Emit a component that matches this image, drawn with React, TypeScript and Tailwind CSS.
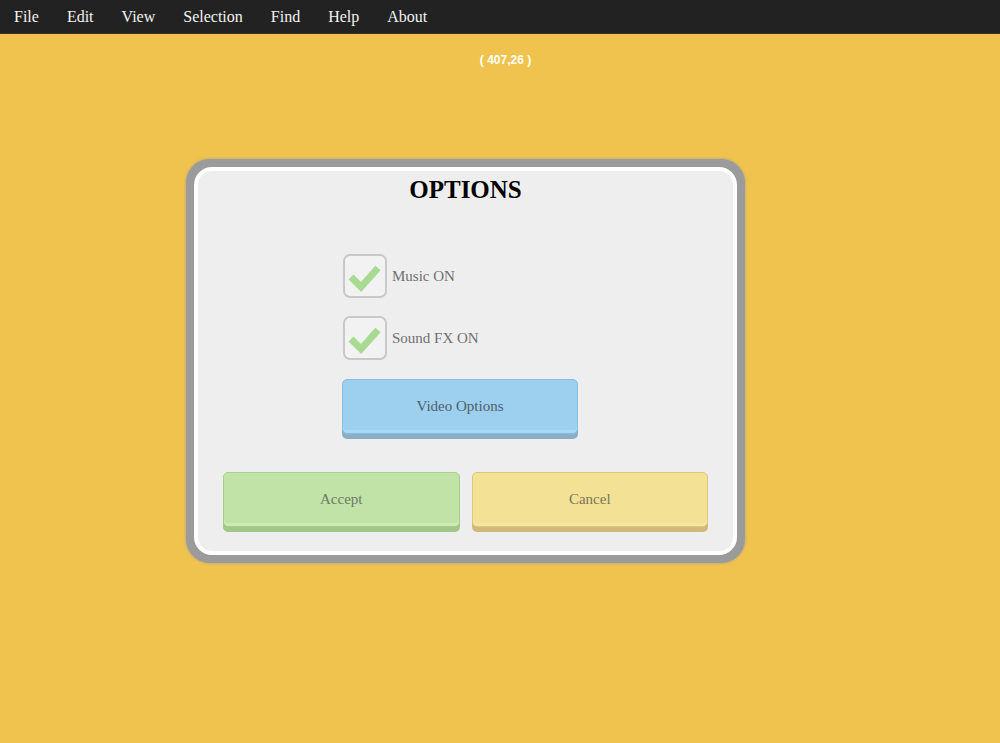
const menuItems = ["File", "Edit", "View", "Selection", "Find", "Help", "About"];

function CheckRow({ label }: { label: string }) {
  return (
    <label className="flex h-[44px] items-center gap-[5px]">
      <span className="flex h-[44px] w-[44px] items-center justify-center rounded-[7px] border-2 border-[#c8c8c8] bg-[#f2f2f2]">
        <svg width="44" height="44" viewBox="0 0 44 44" className="shrink-0">
          <polyline
            points="8,23 18,33 35,14"
            fill="none"
            stroke="#a8da92"
            strokeWidth="7"
            strokeLinejoin="miter"
          />
        </svg>
      </span>
      <span className="text-[15px] text-[#707070]">{label}</span>
    </label>
  );
}

export default function App() {
  return (
    <div className="flex min-h-[743px] w-full flex-col bg-[#f0c34f] font-['Liberation_Serif',serif]">
      <nav className="flex h-[34px] items-center border-b border-[#3a3428] bg-[#222222]">
        {menuItems.map((item) => (
          <span key={item} className="px-[14px] text-[16px] text-[#f2f2f2]">
            {item}
          </span>
        ))}
      </nav>

      <div className="mt-[19px] flex justify-center pl-[11px] font-['Liberation_Sans',sans-serif] text-[12px] font-bold leading-[14px] text-white">
        ( 407,26 )
      </div>

      <div className="ml-[186px] mt-[92px] w-[559px] rounded-[24px] bg-[#9b9b9b] p-[8px] shadow-[0_0_3px_#9b9b9b]">
        <div className="rounded-[18px] border-4 border-white bg-[#eeeeee] px-[25px] pb-[24px] pt-[5px]">
          <h1 className="text-center text-[25px] font-bold leading-[28px] text-black">
            OPTIONS
          </h1>

          <div className="ml-[120px] mt-[50px] flex flex-col gap-[18px]">
            <CheckRow label="Music ON" />
            <CheckRow label="Sound FX ON" />
          </div>

          <button className="ml-[119px] mt-[19px] h-[55px] w-[236px] rounded-[5px] border border-[#86bfe2] bg-[#9dd0ee] text-[15px] text-[#4d5f6b] shadow-[inset_0_-3px_0_#a9d8f2,0_5px_0_#8aaec6]">
            Video Options
          </button>

          <div className="mt-[38px] flex gap-[12px]">
            <button className="h-[55px] w-[237px] rounded-[5px] border border-[#a6cf8c] bg-[#c2e3a8] text-[15px] text-[#6b7a62] shadow-[inset_0_-3px_0_#cdeab6,0_5px_0_#a3c68a]">
              Accept
            </button>
            <button className="h-[55px] w-[237px] rounded-[5px] border border-[#dcc87c] bg-[#f3e196] text-[15px] text-[#7d7558] shadow-[inset_0_-3px_0_#f5e6a6,0_5px_0_#cfba78]">
              Cancel
            </button>
          </div>
        </div>
      </div>
    </div>
  );
}
